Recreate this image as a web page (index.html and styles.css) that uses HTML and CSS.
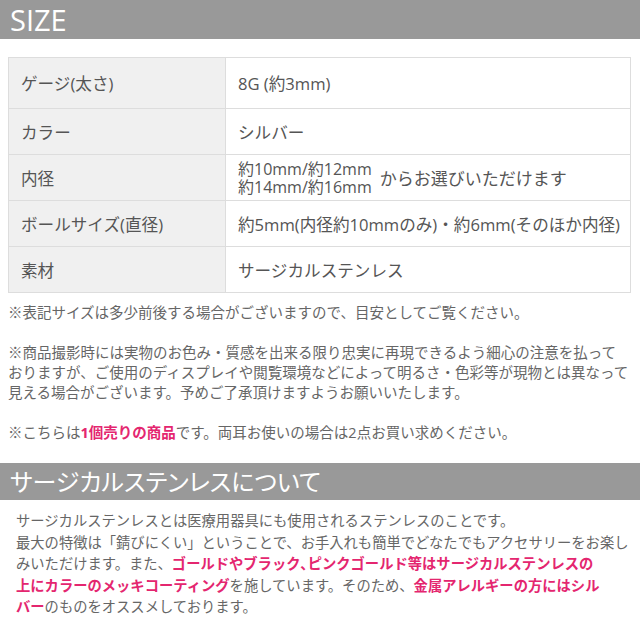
FILE: index.html
```html
<!DOCTYPE html>
<html lang="ja">
<head>
    <meta charset="UTF-8">
    <meta name="viewport" content="width=device-width, initial-scale=1.0">
    <title>SIZE</title>
    <link rel="stylesheet" href="styles.css">
</head>
<body>
    <h2 class="bar bar-size">SIZE</h2>

    <table class="spec">
        <tr class="first">
            <th>ゲージ(太さ)</th>
            <td>8G (約3mm)</td>
        </tr>
        <tr>
            <th>カラー</th>
            <td>シルバー</td>
        </tr>
        <tr>
            <th>内径</th>
            <td>
                <div class="sizes">
                    <div class="sizes-list">
                        <div>約10mm/約12mm</div>
                        <div>約14mm/約16mm</div>
                    </div>
                    <span class="sizes-text">からお選びいただけます</span>
                </div>
            </td>
        </tr>
        <tr>
            <th>ボールサイズ(直径)</th>
            <td>約5mm(内径約10mmのみ)・約6mm(そのほか内径)</td>
        </tr>
        <tr>
            <th>素材</th>
            <td>サージカルステンレス</td>
        </tr>
    </table>

    <p class="note">※表記サイズは多少前後する場合がございますので、目安としてご覧ください。</p>
    <p class="note">※商品撮影時には実物のお色み・質感を出来る限り忠実に再現できるよう細心の注意を払って<br>おりますが、ご使用のディスプレイや閲覧環境などによって明るさ・色彩等が現物とは異なって<br>見える場合がございます。予めご了承頂けますようお願いいたします。</p>
    <p class="note">※こちらは<b class="pink">1個売りの商品</b>です。両耳お使いの場合は2点お買い求めください。</p>

    <h2 class="bar bar-about">サージカルステンレスについて</h2>

    <p class="about">サージカルステンレスとは医療用器具にも使用されるステンレスのことです。<br>最大の特徴は「錆びにくい」ということで、お手入れも簡単でどなたでもアクセサリーをお楽し<br>みいただけます。また、<b class="pink">ゴールドやブラック､ピンクゴールド等はサージカルステンレスの<br>上にカラーのメッキコーティング</b>を施しています。そのため、<b class="pink">金属アレルギーの方にはシル<br>バー</b>のものをオススメしております。</p>
</body>
</html>
```

FILE: styles.css
```css
body {
    margin: 0;
    font-family: "Open Sans", "Noto Sans CJK JP", sans-serif;
    color: #555;
    background: #fff;
}
.bar {
    margin: 0;
    background-color: #999;
    color: #fff;
    font-weight: 400;
    padding-left: 10px;
}
.bar-size {
    height: 39px;
    line-height: 39px;
    font-size: 29px;
    font-weight: 500;
}
.bar-about {
    margin-top: 20px;
    height: 37px;
    line-height: 37px;
    font-size: 24px;
    font-feature-settings: "palt";
}
.spec {
    margin: 18px 0 0 8px;
    width: 623px;
    border-collapse: collapse;
    font-size: 16.6px;
}
.spec th, .spec td {
    border: 1px solid #ddd;
    height: 45px;
    padding: 0 0 0 12px;
    text-align: left;
    font-weight: 400;
    color: #555;
}
.spec th {
    width: 204px;
    background-color: #f0f0f0;
}
.spec .first th, .spec .first td {
    height: 50px;
}
.sizes {
    display: flex;
    align-items: center;
    gap: 8px;
}
.sizes-list {
    font-size: 16px;
    line-height: 18px;
}
.sizes-text {
    font-size: 17px;
}
.note {
    margin: 10px 0 0 8px;
    font-size: 14.5px;
    line-height: 20px;
    color: #666;
}
.note + .note {
    margin-top: 20px;
}
.pink {
    color: #e4266f;
    font-weight: 700;
}
.about {
    margin: 10px 0 0 16px;
    font-size: 14.3px;
    line-height: 21.5px;
    color: #666;
}
```
